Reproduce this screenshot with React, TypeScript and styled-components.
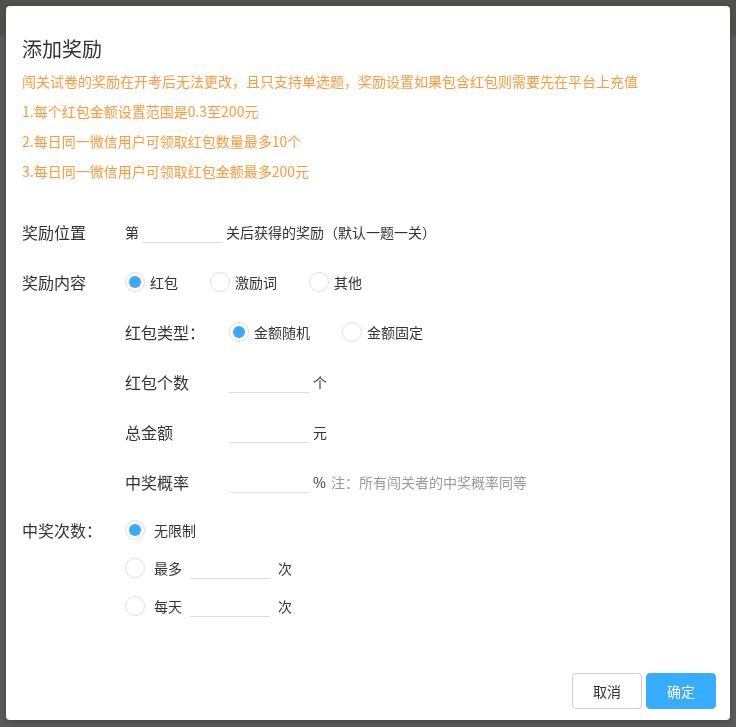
import React, { useState } from 'react'
import styled, { createGlobalStyle } from 'styled-components'

const GlobalStyle = createGlobalStyle`
  html, body {
    margin: 0;
    padding: 0;
  }
  body {
    font-family: "Noto Sans CJK SC", "Noto Sans", sans-serif;
    background: #5c5d5b;
    color: #333;
  }
  * { box-sizing: border-box; }
`

const Page = () => {
  const [reward, setReward] = useState('red')
  const [packet, setPacket] = useState('random')
  const [times, setTimes] = useState('none')

  return (
    <>
      <GlobalStyle />
      <Backdrop>
        <BackHeader />
      </Backdrop>
      <Mask>
        <Modal>
          <Title>添加奖励</Title>
          <Notice>
            <p>闯关试卷的奖励在开考后无法更改，且只支持单选题，奖励设置如果包含红包则需要先在平台上充值</p>
            <p>1.每个红包金额设置范围是0.3至200元</p>
            <p>2.每日同一微信用户可领取红包数量最多10个</p>
            <p>3.每日同一微信用户可领取红包金额最多200元</p>
          </Notice>

          <Form>
            <Row>
              <Label>奖励位置</Label>
              <Text>第</Text>
              <Line wd="80px" ml="3px" mr="4px" />
              <Text>关后获得的奖励（默认一题一关）</Text>
            </Row>

            <Row>
              <Label>奖励内容</Label>
              <Option onClick={() => setReward('red')}>
                <Dot on={reward === 'red'} />红包
              </Option>
              <Option onClick={() => setReward('word')}>
                <Dot on={reward === 'word'} />激励词
              </Option>
              <Option onClick={() => setReward('other')}>
                <Dot on={reward === 'other'} />其他
              </Option>
            </Row>

            <SubRow>
              <SubLabel>红包类型：</SubLabel>
              <Option onClick={() => setPacket('random')}>
                <Dot on={packet === 'random'} />金额随机
              </Option>
              <Option onClick={() => setPacket('fixed')}>
                <Dot on={packet === 'fixed'} />金额固定
              </Option>
            </SubRow>

            <SubRow>
              <SubLabel>红包个数</SubLabel>
              <Line wd="80px" ml="0" mr="4px" />
              <Text>个</Text>
            </SubRow>

            <SubRow>
              <SubLabel>总金额</SubLabel>
              <Line wd="80px" ml="0" mr="4px" />
              <Text>元</Text>
            </SubRow>

            <SubRow>
              <SubLabel>中奖概率</SubLabel>
              <Line wd="80px" ml="0" mr="4px" />
              <Text>%</Text>
              <Note>注：所有闯关者的中奖概率同等</Note>
            </SubRow>

            <TimesBlock>
              <Label>中奖次数：</Label>
              <TimesList>
                <TimesItem onClick={() => setTimes('none')}>
                  <Dot on={times === 'none'} />
                  <TimesText>无限制</TimesText>
                </TimesItem>
                <TimesItem onClick={() => setTimes('max')}>
                  <Dot on={times === 'max'} />
                  <TimesText>最多</TimesText>
                  <Line wd="80px" ml="8px" mr="8px" />
                  <Text>次</Text>
                </TimesItem>
                <TimesItem onClick={() => setTimes('day')}>
                  <Dot on={times === 'day'} />
                  <TimesText>每天</TimesText>
                  <Line wd="80px" ml="8px" mr="8px" />
                  <Text>次</Text>
                </TimesItem>
              </TimesList>
            </TimesBlock>
          </Form>

          <Footer>
            <Button primary={false}>取消</Button>
            <Button primary={true}>确定</Button>
          </Footer>
        </Modal>
      </Mask>
    </>
  )
}

export default function App() {
  return <Page />
}

const Backdrop = styled.div`
  width: 100%;
  height: 727px;
  background: #5c5d5b;
`

const BackHeader = styled.div`
  height: 35px;
  background: #4f544b;
`

const Mask = styled.div`
  position: fixed;
  inset: 0;
  padding: 6px 6px 7px 6px;
  display: flex;
`

const Modal = styled.div`
  width: 724px;
  height: 714px;
  background: #fff;
  border-radius: 4px;
  padding: 29px 14px 11px 16px;
  display: flex;
  flex-direction: column;
  box-shadow: 0 2px 8px rgba(0, 0, 0, 0.25);
`

const Title = styled.h3`
  margin: 0;
  font-size: 20px;
  font-weight: 400;
  line-height: 28px;
  color: #333;
`

const Notice = styled.div`
  margin-top: 3px;
  color: #ff9a3c;
  font-size: 14px;
  p {
    margin: 0;
    line-height: 30px;
    white-space: nowrap;
  }
`

const Form = styled.div`
  margin-top: 31px;
  display: flex;
  flex-direction: column;
  gap: 20px;
`

const Row = styled.div`
  height: 30px;
  display: flex;
  align-items: center;
`

const SubRow = styled(Row)`
  padding-left: 103px;
`

const Label = styled.div`
  width: 103px;
  flex-shrink: 0;
  font-size: 16px;
  line-height: 30px;
  color: #333;
`

const SubLabel = styled(Label)`
  width: 104px;
`

const Text = styled.span`
  font-size: 14px;
  color: #333;
  white-space: nowrap;
`

const Note = styled.span`
  margin-left: 5px;
  font-size: 14px;
  color: #999;
`

const Line = styled.input.attrs({ type: 'text' })<{ wd: string; ml: string; mr: string }>`
  width: ${(p) => p.wd};
  height: 22px;
  margin: 0 ${(p) => p.mr} 0 ${(p) => p.ml};
  padding: 0 4px;
  border: none;
  border-bottom: 1px solid #ddd;
  outline: none;
  background: transparent;
  font-size: 14px;
  font-family: inherit;
  align-self: center;
`

const Option = styled.label`
  display: inline-flex;
  align-items: center;
  gap: 5px;
  margin-right: 32px;
  font-size: 14px;
  color: #333;
  cursor: pointer;
  white-space: nowrap;
`

const Dot = styled.span<{ on: boolean }>`
  width: 20px;
  height: 20px;
  flex-shrink: 0;
  border-radius: 50%;
  border: 1px solid #e1e1e1;
  background: #fff;
  position: relative;
  box-shadow: 0 0 1px rgba(0, 0, 0, 0.06);
  &::after {
    content: "";
    display: ${(p) => (p.on ? 'block' : 'none')};
    position: absolute;
    left: 3px;
    top: 3px;
    width: 12px;
    height: 12px;
    border-radius: 50%;
    background: #3aa9fb;
  }
`

const TimesBlock = styled.div`
  display: flex;
  align-items: flex-start;
  margin-top: -2px;
`

const TimesList = styled.div`
  display: flex;
  flex-direction: column;
  gap: 8px;
`

const TimesItem = styled.label`
  height: 30px;
  display: flex;
  align-items: center;
  cursor: pointer;
`

const TimesText = styled.span`
  margin-left: 9px;
  font-size: 14px;
  color: #333;
`

const Footer = styled.div`
  margin-top: auto;
  display: flex;
  justify-content: flex-end;
  gap: 4px;
`

const Button = styled.button<{ primary: boolean }>`
  width: 70px;
  height: 36px;
  border-radius: 4px;
  font-size: 14px;
  font-family: inherit;
  cursor: pointer;
  border: 1px solid ${(p) => (p.primary ? '#38adff' : '#ccc')};
  background: ${(p) => (p.primary ? '#38adff' : '#fff')};
  color: ${(p) => (p.primary ? '#fff' : '#333')};
`
